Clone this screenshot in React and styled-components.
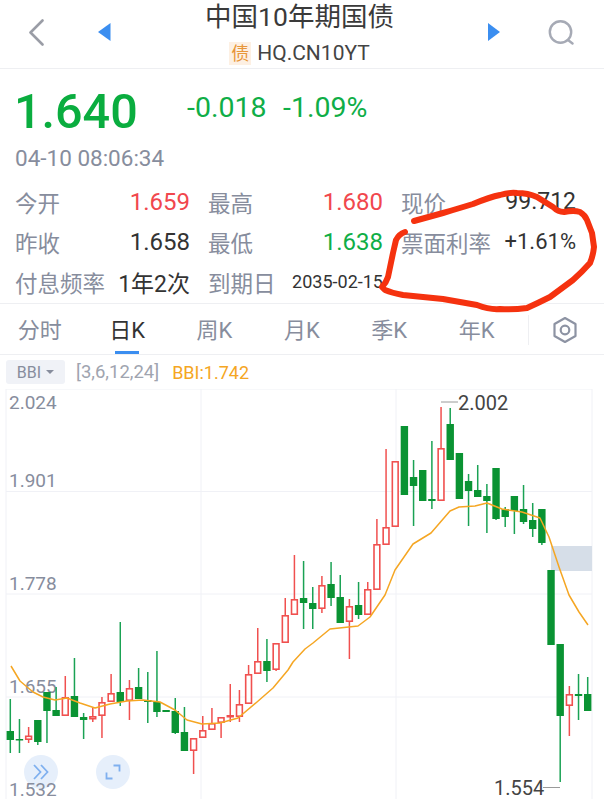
import React from "react";
import styled, { createGlobalStyle } from "styled-components";

const FONT = `Roboto, "Noto Sans CJK SC", sans-serif`;
const GREEN = "#0fae47";
const RED = "#f1474d";
const GREY = "#878d9d";
const BLUE = "#3b8ef0";

const GlobalStyle = createGlobalStyle`
  html, body {
    margin: 0;
    padding: 0;
    background: #fff;
    overflow: hidden;
  }
`;

const Page = styled.div`
  position: relative;
  width: 604px;
  height: 799px;
  overflow: hidden;
  background: #fff;
  font-family: ${FONT};
  color: #333;
`;

const Header = styled.header`
  display: grid;
  grid-template-columns: 1fr auto 1fr;
  height: 68px;
  border-bottom: 1px solid #eeeff2;
`;

const HeaderSide = styled.div`
  display: flex;
  align-items: center;
  justify-content: ${(p) => (p.$right ? "flex-end" : "flex-start")};
  gap: ${(p) => (p.$right ? "48px" : "54px")};
  padding: 0 ${(p) => (p.$right ? "30px" : "0")} 4px ${(p) => (p.$right ? "0" : "28px")};
`;

const TitleBlock = styled.div`
  display: flex;
  flex-direction: column;
  align-items: center;
  padding: 2px 5px 0 0;
`;

const Title = styled.h1`
  margin: 0;
  font-size: 26.5px;
  font-weight: 400;
  line-height: 30px;
  color: #3a3a3a;
`;

const Symbol = styled.div`
  display: flex;
  align-items: center;
  gap: 6px;
  margin-top: 10px;
  font-size: 21px;
  line-height: 23px;
  color: #444;
`;

const TypeBadge = styled.span`
  display: block;
  width: 22px;
  height: 23px;
  background: #fdf0e3;
  color: #e8963a;
  font-size: 18px;
  line-height: 23px;
  text-align: center;
`;

const Quote = styled.section`
  height: 114px;
  padding: 19px 15px 0;
  box-sizing: border-box;
`;

const QuoteRow = styled.div`
  display: flex;
  align-items: flex-start;
  height: 47px;
`;

const Price = styled.div`
  width: 172px;
  margin-left: -1px;
  margin-right: 1px;
  font-size: 48.5px;
  font-weight: 500;
  line-height: 47px;
  color: #0aad3f;
`;

const Change = styled.div`
  width: 96px;
  padding-top: 4px;
  font-size: 28.5px;
  line-height: 32px;
  color: ${GREEN};
  white-space: nowrap;
`;

const Time = styled.div`
  margin-top: 11px;
  font-size: 22.5px;
  line-height: 24px;
  color: ${GREY};
`;

const Stats = styled.section`
  display: grid;
  grid-template-columns: repeat(3, 193px);
  grid-auto-rows: 40px;
  height: 120px;
  padding-left: 15px;
`;

const Stat = styled.div`
  display: flex;
  align-items: center;
  justify-content: space-between;
  width: 175px;
  padding-bottom: 3px;
  box-sizing: border-box;
  white-space: nowrap;
`;

const StatLabel = styled.span`
  font-size: 22.5px;
  color: ${GREY};
`;

const StatValue = styled.span`
  font-size: ${(p) => p.$size || 24}px;
  color: ${(p) => p.$color || "#333"};
`;

const Tabs = styled.nav`
  display: flex;
  align-items: stretch;
  height: 52px;
  box-sizing: border-box;
  border-top: 1px solid #eeeff2;
  border-bottom: 1px solid #eeeff2;
  margin-left: -4px;
  width: 608px;
`;

const Tab = styled.div`
  position: relative;
  width: 87.4px;
  display: flex;
  align-items: center;
  justify-content: center;
  padding-bottom: 3px;
  font-size: 22px;
  color: ${(p) => (p.$active ? "#333" : GREY)};

  &::after {
    content: "";
    display: ${(p) => (p.$active ? "block" : "none")};
    position: absolute;
    left: 32px;
    bottom: 0;
    width: 24px;
    height: 3px;
    background: ${BLUE};
  }
`;

const TabTools = styled.div`
  display: flex;
  align-items: center;
  justify-content: center;
  width: 71px;
  height: 30px;
  margin: 11px 0 0 8px;
  border-left: 1px solid #eeeff2;
`;

const IndicatorBar = styled.div`
  display: flex;
  align-items: center;
  height: 34px;
  padding-left: 6px;
  box-sizing: border-box;
  white-space: nowrap;
`;

const IndicatorSelect = styled.div`
  display: flex;
  align-items: center;
  justify-content: center;
  gap: 5px;
  width: 59px;
  height: 24px;
  border-radius: 3px;
  background: #f0f2f7;
  font-size: 16px;
  color: ${GREY};
`;

const Caret = styled.i`
  display: block;
  width: 0;
  height: 0;
  border-left: 4px solid transparent;
  border-right: 4px solid transparent;
  border-top: 4px solid ${GREY};
`;

const IndicatorParams = styled.span`
  margin-left: 11px;
  font-size: 18.5px;
  color: #a0a4af;
`;

const IndicatorValue = styled.span`
  margin-left: 13px;
  font-size: 18px;
  color: #f5a623;
`;

const ChartBox = styled.div`
  position: relative;
  height: 410px;
`;

const ChartSvg = styled.svg`
  position: relative;
  z-index: 1;
  display: block;
`;

const CircleButton = styled.div`
  position: absolute;
  left: ${(p) => p.$left}px;
  top: 366px;
  display: flex;
  align-items: center;
  justify-content: center;
  width: 34px;
  height: 34px;
  border-radius: 50%;
  background: #e6effb;
`;

const Scribble = styled.svg`
  position: absolute;
  z-index: 2;
  left: 0;
  top: 0;
  pointer-events: none;
`;

// i, wick top, wick bottom, body top, body bottom, colour
const CANDLES = [
  [0, 699, 753, 731, 740, "g"],
  [1, 719, 753, 739, 740.5, "g"],
  [2, 727, 743, 735.5, 740, "r"],
  [3, 720, 745, 720, 742, "g"],
  [4, 692, 743, 692, 711, "g"],
  [5, 687, 716, 710, 716, "g"],
  [6, 676, 716, 697, 716, "r"],
  [7, 658, 717, 696, 717, "g"],
  [8, 713, 739, 717, 720, "g"],
  [9, 708, 722, 716, 719.5, "r"],
  [10, 697, 738, 702, 716, "r"],
  [11, 674, 702, 693, 702, "r"],
  [12, 622, 706, 692, 702, "g"],
  [13, 680, 720, 688, 701, "r"],
  [14, 668, 699, 687, 699, "g"],
  [15, 672, 723, 700, 702, "g"],
  [16, 651, 717, 702, 712, "g"],
  [17, 710, 712, 710, 712, "g"],
  [18, 698, 734, 711, 733, "g"],
  [19, 707, 751, 732, 751, "g"],
  [20, 738, 774, 738, 751, "r"],
  [21, 716, 738, 730, 738, "r"],
  [22, 708, 730, 723, 730, "r"],
  [23, 717, 738, 717, 723, "r"],
  [24, 684, 722, 715, 717.5, "f"],
  [25, 690, 722, 704, 717, "r"],
  [26, 665, 704, 674, 704, "r"],
  [27, 628, 674, 661, 674, "r"],
  [28, 639, 682, 661, 671, "g"],
  [29, 643, 671, 643, 670, "r"],
  [30, 598, 643, 615, 643, "r"],
  [31, 555, 615, 599, 615, "r"],
  [32, 561, 629, 598, 603, "g"],
  [33, 587, 629, 603, 609, "g"],
  [34, 576, 613, 585, 609, "r"],
  [35, 562, 606, 584, 598, "g"],
  [36, 575, 623, 597, 623, "g"],
  [37, 599, 659, 606, 622, "r"],
  [38, 582, 619, 605, 615, "g"],
  [39, 582, 615, 589, 615, "r"],
  [40, 519, 590, 544, 590, "r"],
  [41, 449, 545, 527, 545, "r"],
  [42, 461, 527, 461, 527, "r"],
  [43, 426, 495, 426, 495, "g"],
  [44, 460, 526, 477, 486, "g"],
  [45, 470, 501, 470, 501, "g"],
  [46, 441, 509, 499, 501, "g"],
  [47, 407, 501, 448, 501, "r"],
  [48, 408, 460, 424, 460, "g"],
  [49, 453, 499, 453, 499, "g"],
  [50, 474, 526, 481, 491, "g"],
  [51, 465, 497, 490, 497, "g"],
  [52, 484, 533, 496, 501, "g"],
  [53, 468, 520, 468, 519, "g"],
  [54, 507, 527, 509, 517, "g"],
  [55, 496, 534, 496, 511, "g"],
  [56, 485, 524, 509, 522, "g"],
  [57, 503, 537, 520, 529, "g"],
  [58, 509, 545, 509, 543, "g"],
  [59, 570, 645, 570, 645, "g"],
  [60, 644, 782, 644, 716, "g"],
  [61, 686, 736, 694, 706, "r"],
  [62, 674, 720, 694, 696, "g"],
  [63, 677, 711, 694, 711, "g"],
];

const BBI_LINE =
  "11,666 20,681 33,692 43,697 55,700 67,698 80,703 95,708 110,704 127,701 143,700 160,702 175,710 187,720 202,724 220,723 238,718 257,702 273,688 288,670 293,662 305,649 313,643 330,629 358,626 370,617 385,595 395,570 413,544 431,533 450,511 459,507 475,506 487,503 502,509 522,512 540,518 549,537 559,567 569,595 579,612 588,625";

const SCRIBBLE_LINE =
  "M414 221 L443 213 Q460 208 473 204 Q490 197 500 195 Q510 192 517 193 Q528 193 537 197 L553 207 Q558 212 564 212 Q574 210 580 212 Q585 215 587 220 L592 233 L594 247 Q593 256 590 263 Q582 272 573 280 L550 297 Q538 303 527 308 Q513 310 500 309 Q490 310 477 305 Q460 302 443 299 L403 295 Q392 293 385 290 L382 287 Q386 283 388 277 L393 253 L396 240 Q399 234 405 232";

const GRID_X = [6, 201, 396, 592];
const GRID_Y = [0, 102.5, 205, 308];
const AXIS = [
  ["2.024", 20],
  ["1.901", 98],
  ["1.778", 201],
  ["1.655", 304],
  ["1.532", 407],
];

const Candle = ({ c }) => {
  const [i, wt, wb, bt, bb, kind] = c;
  const x = 10.3 + 9.165 * i;
  const Y = 389;

  if (kind === "r") {
    return (
      <g>
        <line x1={x} x2={x} y1={wt - Y} y2={wb - Y} stroke="#f0504f" strokeWidth="1.5" />
        <rect x={x - 2.9} y={bt - Y + 0.8} width="5.8" height={bb - bt - 1.6} fill="#fff" stroke="#f0504f" strokeWidth="1.6" />
      </g>
    );
  }

  const color = kind === "f" ? "#f0504f" : "#0a9333";
  return (
    <g>
      <line x1={x} x2={x} y1={wt - Y} y2={wb - Y} stroke={kind === "f" ? color : "#1aa254"} strokeWidth="1.5" />
      <rect x={x - 3.7} y={bt - Y} width="7.4" height={bb - bt} fill={color} />
    </g>
  );
};

const App = () => {
  return (
    <Page>
      <GlobalStyle />
      <Header>
        <HeaderSide>
          <svg width="16" height="27" viewBox="0 0 16 27">
            <path d="M14.5 1.5 L2.5 13.5 L14.5 25.5" fill="none" stroke="#9a9da6" strokeWidth="2.6" strokeLinejoin="round" strokeLinecap="round" />
          </svg>
          <svg width="13" height="18" viewBox="0 0 13 18">
            <path d="M12.5 0 L0 9 L12.5 18 Z" fill={BLUE} />
          </svg>
        </HeaderSide>
        <TitleBlock>
          <Title>中国10年期国债</Title>
          <Symbol>
            <TypeBadge>债</TypeBadge>
            HQ.CN10YT
          </Symbol>
        </TitleBlock>
        <HeaderSide $right>
          <svg width="12" height="18" viewBox="0 0 12 18">
            <path d="M0 0 L12 9 L0 18 Z" fill={BLUE} />
          </svg>
          <svg width="26" height="25" viewBox="0 0 26 25">
            <circle cx="12.5" cy="12" r="10.7" fill="none" stroke="#a6aab5" strokeWidth="2.4" />
            <path d="M20 20 L24.5 23.5" fill="none" stroke="#a6aab5" strokeWidth="2.4" strokeLinecap="round" />
          </svg>
        </HeaderSide>
      </Header>

      <Quote>
        <QuoteRow>
          <Price>1.640</Price>
          <Change>-0.018</Change>
          <Change>-1.09%</Change>
        </QuoteRow>
        <Time>04-10 08:06:34</Time>
      </Quote>

      <Stats>
        <Stat>
          <StatLabel>今开</StatLabel>
          <StatValue $color={RED}>1.659</StatValue>
        </Stat>
        <Stat>
          <StatLabel>最高</StatLabel>
          <StatValue $color={RED}>1.680</StatValue>
        </Stat>
        <Stat>
          <StatLabel>现价</StatLabel>
          <StatValue $size={23}>99.712</StatValue>
        </Stat>
        <Stat>
          <StatLabel>昨收</StatLabel>
          <StatValue>1.658</StatValue>
        </Stat>
        <Stat>
          <StatLabel>最低</StatLabel>
          <StatValue $color={GREEN}>1.638</StatValue>
        </Stat>
        <Stat>
          <StatLabel>票面利率</StatLabel>
          <StatValue $size={22}>+1.61%</StatValue>
        </Stat>
        <Stat>
          <StatLabel>付息频率</StatLabel>
          <StatValue $size={23}>1年2次</StatValue>
        </Stat>
        <Stat>
          <StatLabel>到期日</StatLabel>
          <StatValue $size={18}>2035-02-15</StatValue>
        </Stat>
      </Stats>

      <Tabs>
        <Tab>分时</Tab>
        <Tab $active>日K</Tab>
        <Tab>周K</Tab>
        <Tab>月K</Tab>
        <Tab>季K</Tab>
        <Tab>年K</Tab>
        <TabTools>
          <svg width="26" height="28" viewBox="0 0 26 28">
            <path d="M13 2 L23.5 8 L23.5 20 L13 26 L2.5 20 L2.5 8 Z" fill="none" stroke="#8d93a3" strokeWidth="2.2" strokeLinejoin="round" />
            <circle cx="13" cy="14" r="4.3" fill="none" stroke="#8d93a3" strokeWidth="2.2" />
          </svg>
        </TabTools>
      </Tabs>

      <IndicatorBar>
        <IndicatorSelect>
          BBI
          <Caret />
        </IndicatorSelect>
        <IndicatorParams>[3,6,12,24]</IndicatorParams>
        <IndicatorValue>BBI:1.742</IndicatorValue>
      </IndicatorBar>

      <ChartBox>
        <ChartSvg width="604" height="410" viewBox="0 0 604 410">
          {GRID_X.map((x) => (
            <line key={x} x1={x} x2={x} y1="0" y2="410" stroke="#f0f1f6" />
          ))}
          {GRID_Y.map((y) => (
            <line key={y} x1="6" x2="592" y1={y} y2={y} stroke="#f0f1f6" />
          ))}
          <rect x="551" y="157" width="41" height="25" fill="#d6dee8" />
          {AXIS.map(([label, y]) => (
            <text key={label} x="9" y={y} fontFamily={FONT} fontSize="19" fill={GREY}>
              {label}
            </text>
          ))}
          {CANDLES.map((c) => (
            <Candle key={c[0]} c={c} />
          ))}
          <polyline points={BBI_LINE} transform="translate(0 -389)" fill="none" stroke="#f5a623" strokeWidth="1.5" strokeLinejoin="round" />
          <line x1="441" x2="458" y1="13" y2="13" stroke="#9a9a9a" />
          <text x="458" y="21" fontFamily={FONT} fontSize="20" fill="#444">
            2.002
          </text>
          <text x="494" y="406" fontFamily={FONT} fontSize="20" fill="#444">
            1.554
          </text>
          <line x1="543" x2="560" y1="398.5" y2="398.5" stroke="#9a9a9a" />
        </ChartSvg>
        <CircleButton $left={24}>
          <svg width="18" height="18" viewBox="0 0 18 18">
            <path d="M2 2 L8.5 9 L2 16 M9 2 L15.5 9 L9 16" fill="none" stroke="#7fb0ef" strokeWidth="1.8" />
          </svg>
        </CircleButton>
        <CircleButton $left={96}>
          <svg width="16" height="16" viewBox="0 0 16 16">
            <path d="M8.5 1.5 H14.5 V7.5 M1.5 8.5 V14.5 H7.5" fill="none" stroke="#7fb0ef" strokeWidth="1.8" />
          </svg>
        </CircleButton>
      </ChartBox>

      <Scribble width="604" height="799" viewBox="0 0 604 799">
        <path d={SCRIBBLE_LINE} fill="none" stroke="#f5320f" strokeWidth="6" strokeLinecap="round" strokeLinejoin="round" />
      </Scribble>
    </Page>
  );
};

export default App;
